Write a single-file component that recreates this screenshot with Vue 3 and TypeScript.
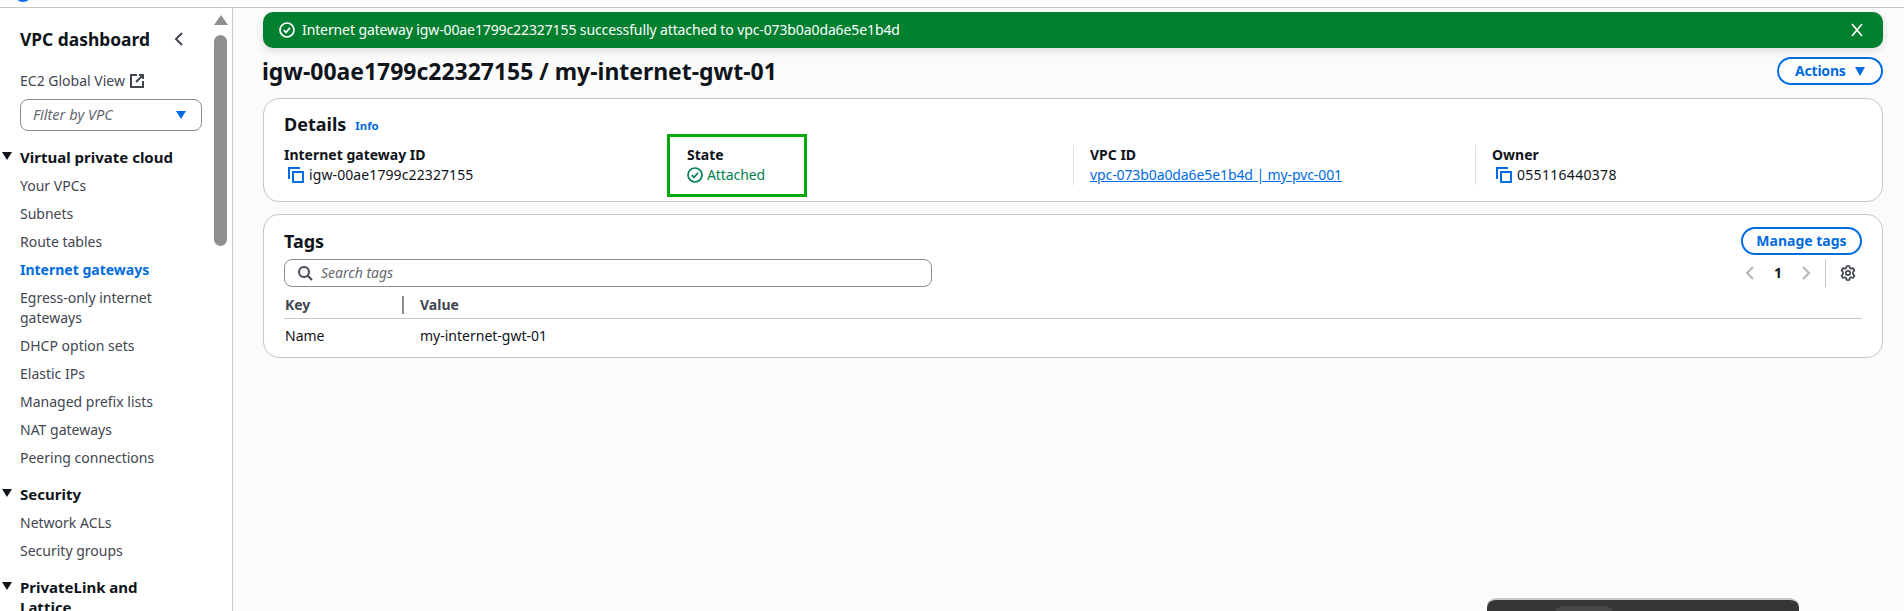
<script setup lang="ts">
interface NavGroup {
  title: string;
  items: string[];
}

const navGroups: NavGroup[] = [
  {
    title: "Virtual private cloud",
    items: [
      "Your VPCs",
      "Subnets",
      "Route tables",
      "Internet gateways",
      "Egress-only internet gateways",
      "DHCP option sets",
      "Elastic IPs",
      "Managed prefix lists",
      "NAT gateways",
      "Peering connections",
    ],
  },
  { title: "Security", items: ["Network ACLs", "Security groups"] },
  { title: "PrivateLink and Lattice", items: [] },
];

const activeItem = "Internet gateways";
const gearPath =
  "M6.6 1h2.8l.4 2 1.3.7 1.9-.7 1.4 2.4-1.5 1.9v1.4l1.5 1.9-1.4 2.4-1.9-.7-1.3.7-.4 2H6.6l-.4-2-1.3-.7-1.9.7-1.4-2.4 1.5-1.9V7.3L1.6 5.4 3 3l1.9.7 1.3-.7z";
</script>

<template>
  <div class="page">
    <header class="topbar"><span class="logo-dot"></span></header>
    <div class="body">
      <aside class="sidebar">
        <div class="side-head">
          <h2>VPC dashboard</h2>
          <svg class="side-close" viewBox="0 0 16 16" width="16" height="16">
            <path d="M11 2 5 8l6 6" />
          </svg>
        </div>
        <div class="global-view">
          EC2 Global View
          <svg viewBox="0 0 16 16" width="16" height="16">
            <path d="M8 2H2v12h12V8M10 2h4v4M14 2 7 9" />
          </svg>
        </div>
        <div class="vpc-filter">
          <span>Filter by VPC</span>
          <i class="filter-caret"></i>
        </div>
        <nav>
          <section v-for="group in navGroups" :key="group.title" class="nav-group">
            <h3><i class="group-caret"></i>{{ group.title }}</h3>
            <a
              v-for="item in group.items"
              :key="item"
              :class="['nav-item', { active: item === activeItem }]"
            >{{ item }}</a>
          </section>
        </nav>
        <div class="side-scroll">
          <i class="scroll-up"></i>
          <i class="scroll-thumb"></i>
        </div>
      </aside>

      <main class="main">
        <div class="flash">
          <svg viewBox="0 0 16 16" width="16" height="16">
            <circle cx="8" cy="8" r="7" />
            <path d="m4.8 8 2.2 2.4 4-4.6" />
          </svg>
          <span>Internet gateway igw-00ae1799c22327155 successfully attached to vpc-073b0a0da6e5e1b4d</span>
          <svg class="flash-close" viewBox="0 0 16 16" width="16" height="16">
            <path d="m3 2 10 12M13 2 3 14" />
          </svg>
        </div>

        <div class="title-row">
          <h1>igw-00ae1799c22327155 / my-internet-gwt-01</h1>
          <button class="btn actions">Actions <i class="btn-caret"></i></button>
        </div>

        <section class="card details">
          <div class="details-title">
            <h2>Details</h2>
            <a class="info">Info</a>
          </div>
          <div class="details-grid">
            <div class="cell">
              <label>Internet gateway ID</label>
              <div class="value copy">
                <svg class="copy-icon" viewBox="0 0 16 16" width="16" height="16">
                  <path d="M1 12V1h11M5 5h10v10H5z" />
                </svg>
                igw-00ae1799c22327155
              </div>
            </div>
            <div class="cell divided state-cell">
              <label>State</label>
              <div class="value attached">
                <svg viewBox="0 0 16 16" width="16" height="16">
                  <circle cx="8" cy="8" r="7" />
                  <path d="m4.8 8 2.2 2.4 4-4.6" />
                </svg>
                Attached
              </div>
              <div class="highlight"></div>
            </div>
            <div class="cell divided">
              <label>VPC ID</label>
              <a class="value link">vpc-073b0a0da6e5e1b4d | my-pvc-001</a>
            </div>
            <div class="cell divided">
              <label>Owner</label>
              <div class="value copy owner">
                <svg class="copy-icon" viewBox="0 0 16 16" width="16" height="16">
                  <path d="M1 12V1h11M5 5h10v10H5z" />
                </svg>
                055116440378
              </div>
            </div>
          </div>
        </section>

        <section class="card tags">
          <div class="tags-head">
            <h2>Tags</h2>
            <button class="btn manage">Manage tags</button>
          </div>
          <div class="tags-tools">
            <div class="search">
              <svg viewBox="0 0 16 16" width="16" height="16">
                <circle cx="7" cy="7" r="5" />
                <path d="m11 11 4 4" />
              </svg>
              <span>Search tags</span>
            </div>
            <div class="pager">
              <svg class="pager-arrow" viewBox="0 0 16 16" width="16" height="16">
                <path d="M11 2 5 8l6 6" />
              </svg>
              <b>1</b>
              <svg class="pager-arrow" viewBox="0 0 16 16" width="16" height="16">
                <path d="m5 2 6 6-6 6" />
              </svg>
              <span class="pager-rule"></span>
              <svg class="gear" viewBox="0 0 16 16" width="16" height="16">
                <path :d="gearPath" />
                <circle cx="8" cy="8" r="2.2" />
              </svg>
            </div>
          </div>
          <div class="table-head">
            <span class="col-key">Key</span>
            <span class="col-value">Value</span>
          </div>
          <div class="table-row">
            <span class="col-key">Name</span>
            <span class="col-value">my-internet-gwt-01</span>
          </div>
        </section>
      </main>
    </div>
    <div class="floating-bar"><i></i></div>
  </div>
</template>

<style>
html,
body {
  margin: 0;
  overflow: hidden;
}
</style>

<style scoped>
.page {
  position: relative;
  width: 1904px;
  height: 611px;
  overflow: hidden;
  background: #fff;
  font-family: "Noto Sans", "Open Sans", sans-serif;
  font-size: 14px;
  line-height: 20px;
  color: #0f141a;
}

.topbar {
  height: 7px;
  border-bottom: 1px solid #c6c6cd;
  position: relative;
}

.logo-dot {
  position: absolute;
  left: 14px;
  top: -16px;
  width: 18px;
  height: 18px;
  border-radius: 50%;
  background: #0a6fe8;
}

.body {
  display: flex;
  height: 603px;
}

.sidebar {
  position: relative;
  flex: none;
  width: 233px;
  box-sizing: border-box;
  padding: 18px 0 0 20px;
  border-right: 1px solid #c6c6cd;
  background: #fff;
  color: #424650;
}

.side-head {
  display: flex;
  align-items: center;
  justify-content: space-between;
  width: 167px;
}

.side-head h2 {
  margin: 0;
  font-size: 17.4px;
  line-height: 26px;
  font-weight: 700;
  color: #0f141a;
}

.side-close path {
  fill: none;
  stroke: #424650;
  stroke-width: 2;
}

.global-view {
  display: flex;
  align-items: center;
  gap: 4px;
  margin-top: 19px;
}

.global-view svg path {
  fill: none;
  stroke: #424650;
  stroke-width: 2;
}

.vpc-filter {
  display: flex;
  align-items: center;
  justify-content: space-between;
  box-sizing: border-box;
  width: 182px;
  height: 32px;
  margin-top: 8px;
  padding: 0 15px 0 12px;
  border: 1px solid #8c8c94;
  border-radius: 8px;
  font-size: 14.6px;
  font-style: italic;
  color: #656871;
}

.vpc-filter span {
  position: relative;
  top: -1px;
}

.filter-caret {
  width: 0;
  height: 0;
  border-left: 5.5px solid transparent;
  border-right: 5.5px solid transparent;
  border-top: 8px solid #006ce0;
}

.nav-group {
  margin-top: 12px;
}

.nav-group:first-child {
  margin-top: 16px;
}

.nav-group h3 {
  position: relative;
  width: 160px;
  margin: 0 0 5px;
  font-size: 15px;
  line-height: 20px;
  font-weight: 700;
  color: #0f141a;
}

.group-caret {
  position: absolute;
  left: -18px;
  top: 5px;
  width: 0;
  height: 0;
  border-left: 5px solid transparent;
  border-right: 5px solid transparent;
  border-top: 8px solid #0f141a;
}

.nav-item {
  display: block;
  width: 170px;
  padding: 4px 0;
}

.nav-item.active {
  font-weight: 700;
  color: #006ce0;
}

.side-scroll {
  position: absolute;
  left: 214px;
  top: 7px;
  width: 13px;
}

.scroll-up {
  display: block;
  width: 0;
  height: 0;
  border-left: 7px solid transparent;
  border-right: 7px solid transparent;
  border-bottom: 10px solid #8f8f8f;
}

.scroll-thumb {
  display: block;
  height: 211px;
  margin-top: 10px;
  border-radius: 7px;
  background: #8f8f8f;
}

.main {
  flex: 1;
  box-sizing: border-box;
  padding: 4px 21px 0 30px;
  background: #fbfbfb;
}

.flash {
  display: flex;
  align-items: center;
  gap: 7px;
  height: 36px;
  padding: 0 18px 0 16px;
  border-radius: 10px;
  background: #037f30;
  color: #fff;
  letter-spacing: -0.11px;
  box-shadow: 0 3px 8px rgba(0, 7, 22, 0.12);
}

.flash svg {
  flex: none;
}

.flash svg circle,
.flash svg path {
  fill: none;
  stroke: #fff;
  stroke-width: 1.7;
}

.flash-close {
  margin-left: auto;
}

.title-row {
  display: flex;
  align-items: center;
  justify-content: space-between;
  margin-top: 9px;
  height: 28px;
}

.title-row h1 {
  margin: 0 0 0 -1px;
  font-size: 22.95px;
  line-height: 30px;
  font-weight: 700;
}

.btn {
  box-sizing: border-box;
  height: 28px;
  border: 2px solid #006ce0;
  border-radius: 20px;
  background: #fff;
  color: #006ce0;
  font: inherit;
  font-weight: 700;
  line-height: 20px;
}

.actions {
  display: flex;
  align-items: center;
  gap: 9px;
  width: 106px;
  padding: 0 0 0 16px;
  letter-spacing: -0.2px;
}

.btn-caret {
  width: 0;
  height: 0;
  border-left: 5.5px solid transparent;
  border-right: 5.5px solid transparent;
  border-top: 9px solid #006ce0;
}

.card {
  box-sizing: border-box;
  border: 1px solid #c6c6cd;
  border-radius: 16px;
  background: #fff;
  padding: 0 20px;
}

.card h2 {
  margin: 0;
  font-size: 18px;
  line-height: 24px;
  font-weight: 700;
}

.details {
  height: 104px;
  margin-top: 13px;
  padding-top: 13px;
}

.details-title {
  display: flex;
  align-items: center;
  gap: 9px;
}

.info {
  position: relative;
  top: 2px;
  font-size: 11.4px;
  font-weight: 700;
  color: #006ce0;
}

.details-grid {
  display: grid;
  grid-template-columns: 387px 402px 402px 1fr;
  margin-top: 9px;
}

.cell {
  position: relative;
  height: 40px;
}

.cell label {
  display: block;
  font-weight: 700;
}

.divided {
  box-sizing: border-box;
  padding-left: 16px;
  border-left: 1px solid #dedee3;
}

.state-cell {
  padding-left: 15px;
  border-left-color: transparent;
}

.value {
  display: flex;
  align-items: center;
  gap: 5px;
}

.copy {
  padding-left: 4px;
  letter-spacing: 0.1px;
}

.owner {
  letter-spacing: 0.3px;
}

.copy-icon path {
  fill: none;
  stroke: #006ce0;
  stroke-width: 2;
}

.attached {
  gap: 4px;
  color: #037f51;
  letter-spacing: -0.1px;
}

.attached svg circle,
.attached svg path {
  fill: none;
  stroke: #037f51;
  stroke-width: 1.7;
}

.link {
  display: inline-block;
  color: #006ce0;
  text-decoration: underline;
  letter-spacing: -0.1px;
}

.highlight {
  position: absolute;
  left: -5px;
  top: -11px;
  width: 140px;
  height: 63px;
  box-sizing: border-box;
  border: 3px solid #08a808;
}

.tags {
  height: 144px;
  margin-top: 12px;
}

.tags-head {
  display: flex;
  align-items: center;
  justify-content: space-between;
  margin-top: 12px;
}

.manage {
  width: 121px;
  padding: 0;
}

.tags-tools {
  display: flex;
  align-items: center;
  justify-content: space-between;
  margin-top: 4px;
}

.search {
  display: flex;
  align-items: center;
  gap: 8px;
  box-sizing: border-box;
  width: 648px;
  height: 28px;
  padding-left: 12px;
  border: 1px solid #8c8c94;
  border-radius: 8px;
  color: #656871;
  font-style: italic;
}

.search svg circle,
.search svg path {
  fill: none;
  stroke: #424650;
  stroke-width: 2;
}

.pager {
  display: flex;
  align-items: center;
  height: 28px;
  margin-right: 6px;
}

.pager b {
  width: 32px;
  margin: 0 4px;
  text-align: center;
}

.pager-arrow path {
  fill: none;
  stroke: #b4b4bb;
  stroke-width: 2;
}

.pager-rule {
  width: 1px;
  height: 28px;
  margin: 0 14px 0 11px;
  background: #c6c6cd;
}

.gear path,
.gear circle {
  fill: none;
  stroke: #424650;
  stroke-width: 1.7;
  stroke-linejoin: round;
}

.table-head,
.table-row {
  display: flex;
  padding-left: 1px;
}

.table-head {
  position: relative;
  height: 32px;
  padding-top: 4px;
  box-sizing: border-box;
  align-items: center;
  font-weight: 700;
  color: #424650;
  border-bottom: 1px solid #c6c6cd;
}

.table-head .col-value::before {
  content: "";
  position: absolute;
  left: 118px;
  top: 9px;
  width: 2px;
  height: 18px;
  background: #8c8c94;
}

.table-row {
  height: 33px;
  align-items: center;
}

.col-key {
  width: 135px;
}

.floating-bar {
  position: absolute;
  left: 1487px;
  top: 598px;
  width: 312px;
  height: 30px;
  border-top: 2px solid #c9c9c9;
  border-radius: 9px 9px 0 0;
  background: #363636;
}

.floating-bar i {
  position: absolute;
  left: 68px;
  top: 6px;
  width: 58px;
  height: 20px;
  border-radius: 8px;
  background: #474747;
}
</style>
